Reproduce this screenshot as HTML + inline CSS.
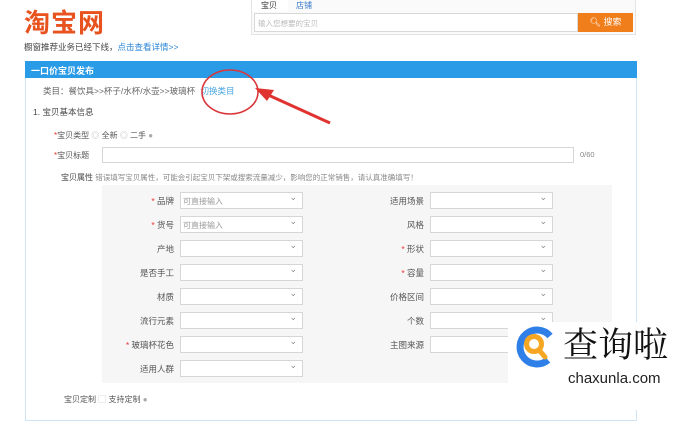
<!DOCTYPE html>
<html><head><meta charset="utf-8"><style>
*{margin:0;padding:0;box-sizing:border-box}
body{width:682px;height:410px;overflow:hidden;background:#fff;font-family:"Liberation Sans","Noto Sans CJK SC",sans-serif;font-size:9px;color:#555;position:relative}
.a{position:absolute;white-space:nowrap}
.sel{position:absolute;height:17px;width:123px;background:#fff;border:1px solid #d6d6d6;font-size:8px;color:#999;padding:3px 0 0 2px}
.sel:after{content:"⌄";position:absolute;right:5px;top:-1px;font-size:9px;color:#888}
.lb{position:absolute;width:70px;text-align:right;font-size:8.5px;color:#555}
.r{color:#e33}
</style></head><body>
<div class="a" style="left:24px;top:3px;font-size:26px;font-weight:bold;color:#e8521e;letter-spacing:1px;font-family:'Noto Sans CJK SC',sans-serif">淘宝网</div>
<div class="a" style="left:251px;top:0;width:385px;height:35px;border:1px solid #e4e4e4;border-top:none;background:#fafafa"></div>
<div class="a" style="left:252px;top:0;width:36px;height:12px;background:#fff"></div>
<div class="a" style="left:261px;top:0;font-size:8px;color:#333">宝贝</div>
<div class="a" style="left:296px;top:0;font-size:8px;color:#3a79c9">店铺</div>
<div class="a" style="left:254px;top:13px;width:324px;height:19px;border:1px solid #d8d8d8;background:#fff;font-size:7.5px;color:#bbb;padding:4px 0 0 3px">输入您想要的宝贝</div>
<div class="a" style="left:578px;top:13px;width:55px;height:19px;background:#f07e1a;color:#fff;font-size:9px;text-align:center;line-height:19px">🔍︎ 搜索</div>
<div class="a" style="left:24px;top:41px;font-size:8.5px;color:#444">橱窗推荐业务已经下线，<span style="color:#2b86d8">点击查看详情&gt;&gt;</span></div>
<div class="a" style="left:25px;top:61px;width:612px;height:360px;border:1px solid #cfe4f5"></div>
<div class="a" style="left:25px;top:61px;width:612px;height:17px;background:#2a9be6;color:#fff;font-weight:bold;font-size:9px;padding:3px 0 0 6px">一口价宝贝发布</div>
<div class="a" style="left:43px;top:85px;font-size:8.5px;color:#666">类目：餐饮具&gt;&gt;杯子/水杯/水壶&gt;&gt;玻璃杯 <span style="color:#49a6e0;margin-left:3px">切换类目</span></div>
<div class="a" style="left:33px;top:106px;font-size:8.5px;color:#444">1. 宝贝基本信息</div>
<div class="a" style="left:54px;top:130px;font-size:8px;color:#555"><span class="r">*</span>宝贝类型 <span style="color:#bbb">◎</span> 全新 <span style="color:#bbb">◎</span> 二手 <span style="color:#aaa">●</span></div>
<div class="a" style="left:54px;top:150px;font-size:8px;color:#555"><span class="r">*</span>宝贝标题</div>
<div class="a" style="left:102px;top:147px;width:472px;height:16px;border:1px solid #d6d6d6"></div>
<div class="a" style="left:580px;top:150px;font-size:7.5px;color:#888">0/60</div>
<div class="a" style="left:61px;top:172px;font-size:8px;color:#444">宝贝属性 <span style="color:#888;font-size:7.5px">错误填写宝贝属性，可能会引起宝贝下架或搜索流量减少，影响您的正常销售，请认真准确填写！</span></div>
<div class="a" style="left:102px;top:185px;width:510px;height:198px;background:#f6f6f6"></div>
<div class="lb" style="left:104px;top:195px"><span class="r">* </span>品牌</div><div class="sel" style="left:180px;top:192px">可直接输入</div>
<div class="lb" style="left:104px;top:219px"><span class="r">* </span>货号</div><div class="sel" style="left:180px;top:216px">可直接输入</div>
<div class="lb" style="left:104px;top:243px">产地</div><div class="sel" style="left:180px;top:240px"></div>
<div class="lb" style="left:104px;top:267px">是否手工</div><div class="sel" style="left:180px;top:264px"></div>
<div class="lb" style="left:104px;top:291px">材质</div><div class="sel" style="left:180px;top:288px"></div>
<div class="lb" style="left:104px;top:315px">流行元素</div><div class="sel" style="left:180px;top:312px"></div>
<div class="lb" style="left:104px;top:339px"><span class="r">* </span>玻璃杯花色</div><div class="sel" style="left:180px;top:336px"></div>
<div class="lb" style="left:104px;top:363px">适用人群</div><div class="sel" style="left:180px;top:360px"></div>
<div class="lb" style="left:354px;top:195px">适用场景</div><div class="sel" style="left:430px;top:192px"></div>
<div class="lb" style="left:354px;top:219px">风格</div><div class="sel" style="left:430px;top:216px"></div>
<div class="lb" style="left:354px;top:243px"><span class="r">* </span>形状</div><div class="sel" style="left:430px;top:240px"></div>
<div class="lb" style="left:354px;top:267px"><span class="r">* </span>容量</div><div class="sel" style="left:430px;top:264px"></div>
<div class="lb" style="left:354px;top:291px">价格区间</div><div class="sel" style="left:430px;top:288px"></div>
<div class="lb" style="left:354px;top:315px">个数</div><div class="sel" style="left:430px;top:312px"></div>
<div class="lb" style="left:354px;top:339px">主图来源</div><div class="sel" style="left:430px;top:336px"></div>
<div class="a" style="left:64px;top:394px;font-size:8px;color:#555">宝贝定制 <span style="color:#bbb">▢</span> 支持定制 <span style="color:#aaa">●</span></div>
<svg class="a" style="left:0;top:0" width="682" height="410">
<ellipse cx="230" cy="92" rx="28" ry="22" fill="none" stroke="#d9363a" stroke-width="1.6"/>
<line x1="330" y1="123" x2="266" y2="94" stroke="#e0322f" stroke-width="3"/>
<polygon points="255,88 274,90 267,101" fill="#e0322f"/>
</svg>
<div class="a" style="left:508px;top:322px;width:174px;height:88px;background:#fff"></div>
<svg class="a" style="left:510px;top:322px" width="60" height="50">
<path d="M38 38 A17 17 0 1 1 40 14" fill="none" stroke="#2f7fe8" stroke-width="7"/>
<circle cx="24" cy="22" r="7.5" fill="none" stroke="#f5a623" stroke-width="5"/>
<line x1="29" y1="28" x2="35" y2="35" stroke="#f5a623" stroke-width="5" stroke-linecap="round"/>
</svg>
<div class="a" style="left:563px;top:320px;font-size:35px;color:#111;font-family:'Noto Serif CJK SC',serif;line-height:46px">查询啦</div>
<div class="a" style="left:568px;top:370px;font-size:15px;color:#222;line-height:18px">chaxunla.com</div>
</body></html>
